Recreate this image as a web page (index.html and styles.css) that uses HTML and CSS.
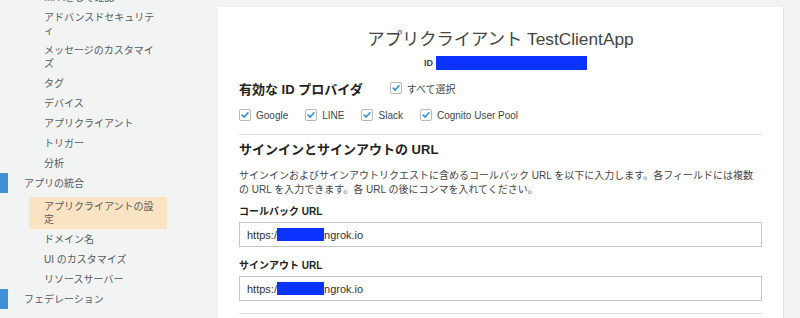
FILE: index.html
```html
<!DOCTYPE html>
<html lang="ja">
<head>
    <meta charset="UTF-8">
    <meta name="viewport" content="width=device-width, initial-scale=1.0">
    <title>アプリクライアントの設定</title>
    <link rel="stylesheet" href="styles.css">
</head>
<body>
    <div class="layout">
        <nav class="sidebar">
            <ul class="nav-list">
                <li class="nav-item sub first">MFAとして確認</li>
                <li class="nav-item sub">アドバンスドセキュリティ</li>
                <li class="nav-item sub">メッセージのカスタマイズ</li>
                <li class="nav-item sub">タグ</li>
                <li class="nav-item sub">デバイス</li>
                <li class="nav-item sub">アプリクライアント</li>
                <li class="nav-item sub">トリガー</li>
                <li class="nav-item sub">分析</li>
                <li class="nav-item group">アプリの統合</li>
                <li class="nav-item sub active">アプリクライアントの設定</li>
                <li class="nav-item sub">ドメイン名</li>
                <li class="nav-item sub">UI のカスタマイズ</li>
                <li class="nav-item sub">リソースサーバー</li>
                <li class="nav-item group">フェデレーション</li>
            </ul>
        </nav>

        <main class="main">
            <div class="panel">
                <h1 class="title">アプリクライアント TestClientApp</h1>
                <div class="client-id">
                    <span class="id-label">ID</span>
                    <span class="redact id-redact"></span>
                </div>

                <div class="provider-head">
                    <h2 class="section-title">有効な ID プロバイダ</h2>
                    <label class="check">
                        <span class="box">
                            <svg viewBox="0 0 12 12" width="12" height="12"><path d="M2.6 6.2 L5 8.5 L9.6 3.4" fill="none" stroke="#2e8ddd" stroke-width="1.9" stroke-linecap="round" stroke-linejoin="round"/></svg>
                        </span>
                        すべて選択
                    </label>
                </div>

                <div class="provider-list">
                    <label class="check">
                        <span class="box">
                            <svg viewBox="0 0 12 12" width="12" height="12"><path d="M2.6 6.2 L5 8.5 L9.6 3.4" fill="none" stroke="#2e8ddd" stroke-width="1.9" stroke-linecap="round" stroke-linejoin="round"/></svg>
                        </span>
                        Google
                    </label>
                    <label class="check">
                        <span class="box">
                            <svg viewBox="0 0 12 12" width="12" height="12"><path d="M2.6 6.2 L5 8.5 L9.6 3.4" fill="none" stroke="#2e8ddd" stroke-width="1.9" stroke-linecap="round" stroke-linejoin="round"/></svg>
                        </span>
                        LINE
                    </label>
                    <label class="check">
                        <span class="box">
                            <svg viewBox="0 0 12 12" width="12" height="12"><path d="M2.6 6.2 L5 8.5 L9.6 3.4" fill="none" stroke="#2e8ddd" stroke-width="1.9" stroke-linecap="round" stroke-linejoin="round"/></svg>
                        </span>
                        Slack
                    </label>
                    <label class="check">
                        <span class="box">
                            <svg viewBox="0 0 12 12" width="12" height="12"><path d="M2.6 6.2 L5 8.5 L9.6 3.4" fill="none" stroke="#2e8ddd" stroke-width="1.9" stroke-linecap="round" stroke-linejoin="round"/></svg>
                        </span>
                        Cognito User Pool
                    </label>
                </div>

                <hr class="divider">

                <h2 class="section-title url-title">サインインとサインアウトの URL</h2>
                <p class="desc">サインインおよびサインアウトリクエストに含めるコールバック URL を以下に入力します。各フィールドには複数の URL を入力できます。各 URL の後にコンマを入れてください。</p>

                <div class="field">
                    <div class="field-label">コールバック URL</div>
                    <div class="text-input">https:/<span class="redact url-redact"></span>.ngrok.io</div>
                </div>
                <div class="field">
                    <div class="field-label">サインアウト URL</div>
                    <div class="text-input">https:/<span class="redact url-redact"></span>.ngrok.io</div>
                </div>

                <hr class="divider bottom">
            </div>
        </main>
    </div>
</body>
</html>
```

FILE: styles.css
```css
body {
    margin: 0;
    padding: 0;
    background: #f2f3f3;
    font-family: "Liberation Sans", Arial, "Noto Sans CJK JP", sans-serif;
    color: #444;
    overflow: hidden;
}

.layout {
    display: flex;
    height: 318px;
    overflow: hidden;
}

/* Sidebar */
.sidebar {
    width: 210px;
    flex-shrink: 0;
}

.nav-list {
    list-style: none;
    margin: 0;
    padding: 0;
}

.nav-item {
    font-size: 10px;
    line-height: 13px;
    color: #545b64;
    padding: 3.5px 0;
}

.nav-item.first {
    margin-top: -13px;
}

.nav-item.sub {
    width: 113px;
    margin-left: 29px;
    padding-left: 15px;
    padding-right: 10px;
}

.nav-item.group {
    position: relative;
    padding-left: 24px;
}

.nav-item.group::before {
    content: "";
    position: absolute;
    left: 0;
    top: 0;
    bottom: 0;
    width: 8px;
    background: #3f90d6;
}

.nav-item.group + .nav-item.sub {
    margin-top: 4px;
}

.nav-item.active {
    background: #f9e3c3;
    padding-top: 3px;
    padding-bottom: 3px;
}

/* Main panel */
.main {
    flex: 1;
    padding: 7px 17px 0 8px;
}

.panel {
    background: #fff;
    box-sizing: border-box;
    height: 100%;
    padding: 22px 21px 0;
    box-shadow: 1px 0 1px rgba(0, 0, 0, 0.08);
}

.title {
    margin: 0;
    text-align: center;
    font-size: 17.3px;
    line-height: 20px;
    font-weight: normal;
    color: #444;
}

.client-id {
    display: flex;
    justify-content: center;
    align-items: center;
    gap: 3px;
    margin-top: 7px;
    height: 14px;
    padding-left: 10px;
}

.id-label {
    font-size: 9px;
    font-weight: bold;
    color: #444;
}

.redact {
    display: inline-block;
    background: #0a33ff;
}

.id-redact {
    width: 151px;
    height: 14px;
}

.provider-head {
    display: flex;
    align-items: center;
    margin-top: 8px;
    height: 20px;
}

.section-title {
    margin: 0;
    font-size: 13px;
    font-weight: bold;
    color: #222;
}

.provider-head .check {
    margin-left: 27px;
}

.check {
    display: inline-flex;
    align-items: center;
    font-size: 10px;
    color: #444;
}

.box {
    width: 12px;
    height: 12px;
    box-sizing: border-box;
    border: 1px solid #b9b9b9;
    border-radius: 2px;
    margin-right: 5px;
    display: flex;
    align-items: center;
    justify-content: center;
    background: #fff;
}

.box svg {
    display: block;
}

.provider-list {
    display: flex;
    align-items: center;
    gap: 17px;
    margin-top: 9px;
    height: 16px;
}

.divider {
    border: none;
    border-top: 1px solid #e1e1e1;
    margin: 11px 0 0;
}

.url-title {
    margin-top: 6px;
    line-height: 18px;
}

.desc {
    margin: 10px 0 8px;
    font-size: 10px;
    line-height: 14px;
    color: #444;
}

.field {
    margin-bottom: 12px;
}

.field-label {
    font-size: 10px;
    line-height: 14px;
    font-weight: bold;
    color: #222;
    margin-bottom: 3px;
}

.text-input {
    height: 25px;
    box-sizing: border-box;
    border: 1px solid #c6c6c6;
    padding: 0 7px;
    display: flex;
    align-items: center;
    font-size: 11px;
    color: #333;
}

.url-redact {
    width: 47px;
    height: 13px;
    margin-right: -3px;
    position: relative;
}

.divider.bottom {
    margin-top: 3px;
}
```
